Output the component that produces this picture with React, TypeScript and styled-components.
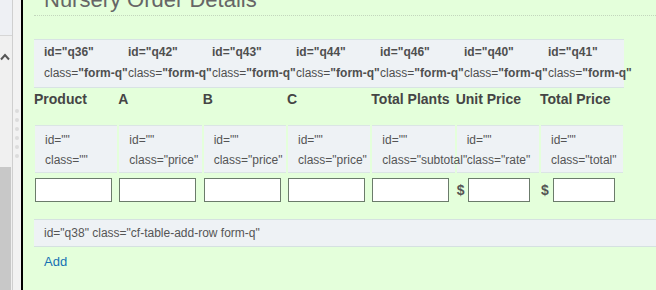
import React from 'react';
import styled, { createGlobalStyle } from 'styled-components';

const GlobalStyle = createGlobalStyle`
  html, body {
    margin: 0;
    padding: 0;
    height: 100%;
    overflow: hidden;
  }
  body {
    font-family: "Liberation Sans", Arial, sans-serif;
  }
`;

const Page = styled.div`
  display: flex;
  height: 290px;
  width: 656px;
  overflow: hidden;
`;

const Sidebar = styled.div`
  display: flex;
  width: 23px;
  flex-shrink: 0;
  border-right: 2px solid #000;
  box-sizing: border-box;
`;

const SidePanel = styled.div`
  display: flex;
  flex-direction: column;
  width: 12px;
  background: #f0f0f0;
  border-right: 1px solid #cfcfcf;
`;

const SideTop = styled.div`
  height: 35px;
  background: #eef0f4;
  border-bottom: 1px solid #d6d6d6;
`;

const Caret = styled.svg`
  display: block;
  margin: 17px 0 0 0;
`;

const SideFill = styled.div`
  height: 106px;
`;

const SideBlock = styled.div`
  flex: 1;
  background: #c8c8c8;
  margin-right: 1px;
`;

const Handle = styled.div`
  width: 8px;
  background: #f2f2f2;
  display: flex;
  flex-direction: column;
  align-items: center;
  gap: 5px;
  padding-top: 109px;
`;

const Dot = styled.span`
  width: 4px;
  height: 4px;
  border-radius: 50%;
  background: #dcdcdc;
`;

const Content = styled.div`
  flex: 1;
  background: #e4ffdb;
  padding-left: 11px;
  overflow: hidden;
`;

const TitleBar = styled.div`
  height: 15px;
  display: flex;
  align-items: flex-end;
  overflow: hidden;
  border-bottom: 1px dotted #c3d6bd;
`;

const Title = styled.h2`
  margin: 0 0 3px 10px;
  font-size: 22px;
  line-height: 24px;
  font-weight: normal;
  color: #666;
  white-space: nowrap;
`;

const IdBar = styled.div`
  display: grid;
  grid-template-columns: repeat(7, 84px);
  width: 590px;
  margin-top: 23px;
  padding: 2px 0 3px;
  box-sizing: border-box;
  background: #eef2f5;
  border-top: 1px solid #d8e3e4;
  border-bottom: 1px solid #d8e3e4;
`;

const IdCell = styled.div`
  padding-left: 10px;
  font-size: 12px;
  line-height: 21px;
  color: #4f4f4f;
  white-space: nowrap;
`;

const Strong = styled.b`
  font-weight: bold;
`;

const Grid = styled.div<{ $top: number }>`
  display: grid;
  grid-template-columns: repeat(7, 84.33px);
  margin-top: ${({ $top }) => $top}px;
`;

const Header = styled.div`
  font-size: 14px;
  line-height: 18px;
  font-weight: bold;
  color: #454545;
  white-space: nowrap;
`;

const AttrCell = styled.div`
  margin: 0 1px;
  padding: 4px 0 2px 10px;
  background: #eef2f5;
  border-top: 1px solid #dbe5e5;
  border-bottom: 1px solid #dbe5e5;
  font-size: 12px;
  line-height: 20px;
  color: #555;
  white-space: nowrap;
`;

/* the long class name spills over the next cell, as in the source page */
const AttrText = styled.span`
  position: relative;
  z-index: 1;
`;

const FieldCell = styled.div`
  display: flex;
  align-items: center;
  padding-left: 1px;
`;

const Dollar = styled.span`
  font-size: 14px;
  font-weight: bold;
  color: #555;
  margin-right: 4px;
`;

const Input = styled.input<{ $w: number }>`
  width: ${({ $w }) => $w}px;
  height: 24px;
  box-sizing: border-box;
  border: 1px solid #6b7b6b;
  background: #fff;
  padding: 0;
  margin: 0;
  outline: none;
`;

const AddBar = styled.div`
  margin-top: 17px;
  height: 28px;
  box-sizing: border-box;
  padding-left: 10px;
  display: flex;
  align-items: center;
  background: #eef2f5;
  border-top: 1px solid #d5e1e1;
  border-bottom: 1px solid #d5e1e1;
  font-size: 12px;
  color: #555;
  white-space: nowrap;
`;

const AddLink = styled.a`
  display: inline-block;
  margin: 7px 0 0 10px;
  font-size: 13px;
  line-height: 16px;
  color: #1471b4;
  text-decoration: none;
`;

const ids = ['q36', 'q42', 'q43', 'q44', 'q46', 'q40', 'q41'];
const headers = ['Product', 'A', 'B', 'C', 'Total Plants', 'Unit Price', 'Total Price'];
const classes = ['', 'price', 'price', 'price', 'subtotal', 'rate', 'total'];

const App = () => {
  return (
    <>
      <GlobalStyle />
      <Page>
        <Sidebar>
          <SidePanel>
            <SideTop />
            <Caret width="11" height="8" viewBox="0 0 11 8">
              <polyline points="1,6.5 5,2 9,6.5" fill="none" stroke="#555" strokeWidth="2" />
            </Caret>
            <SideFill />
            <SideBlock />
          </SidePanel>
          <Handle>
            {[0, 1, 2, 3, 4, 5].map((i) => (
              <Dot key={i} />
            ))}
          </Handle>
        </Sidebar>
        <Content>
          <TitleBar>
            <Title>Nursery Order Details</Title>
          </TitleBar>

          <IdBar>
            {ids.map((id) => (
              <IdCell key={id}>
                <Strong>id="{id}"</Strong>
                <br />
                class=<Strong>"form-q"</Strong>
              </IdCell>
            ))}
          </IdBar>

          <Grid $top={2}>
            {headers.map((h) => (
              <Header key={h}>{h}</Header>
            ))}
          </Grid>

          <Grid $top={17}>
            {classes.map((c, i) => (
              <AttrCell key={i}>
                <AttrText>
                  id=""
                  <br />
                  class="{c}"
                </AttrText>
              </AttrCell>
            ))}
          </Grid>

          <Grid $top={5}>
            {classes.map((c, i) =>
              i >= 5 ? (
                <FieldCell key={i}>
                  <Dollar>$</Dollar>
                  <Input $w={62} />
                </FieldCell>
              ) : (
                <FieldCell key={i}>
                  <Input $w={77} />
                </FieldCell>
              )
            )}
          </Grid>

          <AddBar>id="q38" class="cf-table-add-row form-q"</AddBar>
          <AddLink href="#">Add</AddLink>
        </Content>
      </Page>
    </>
  );
};

export default App;
